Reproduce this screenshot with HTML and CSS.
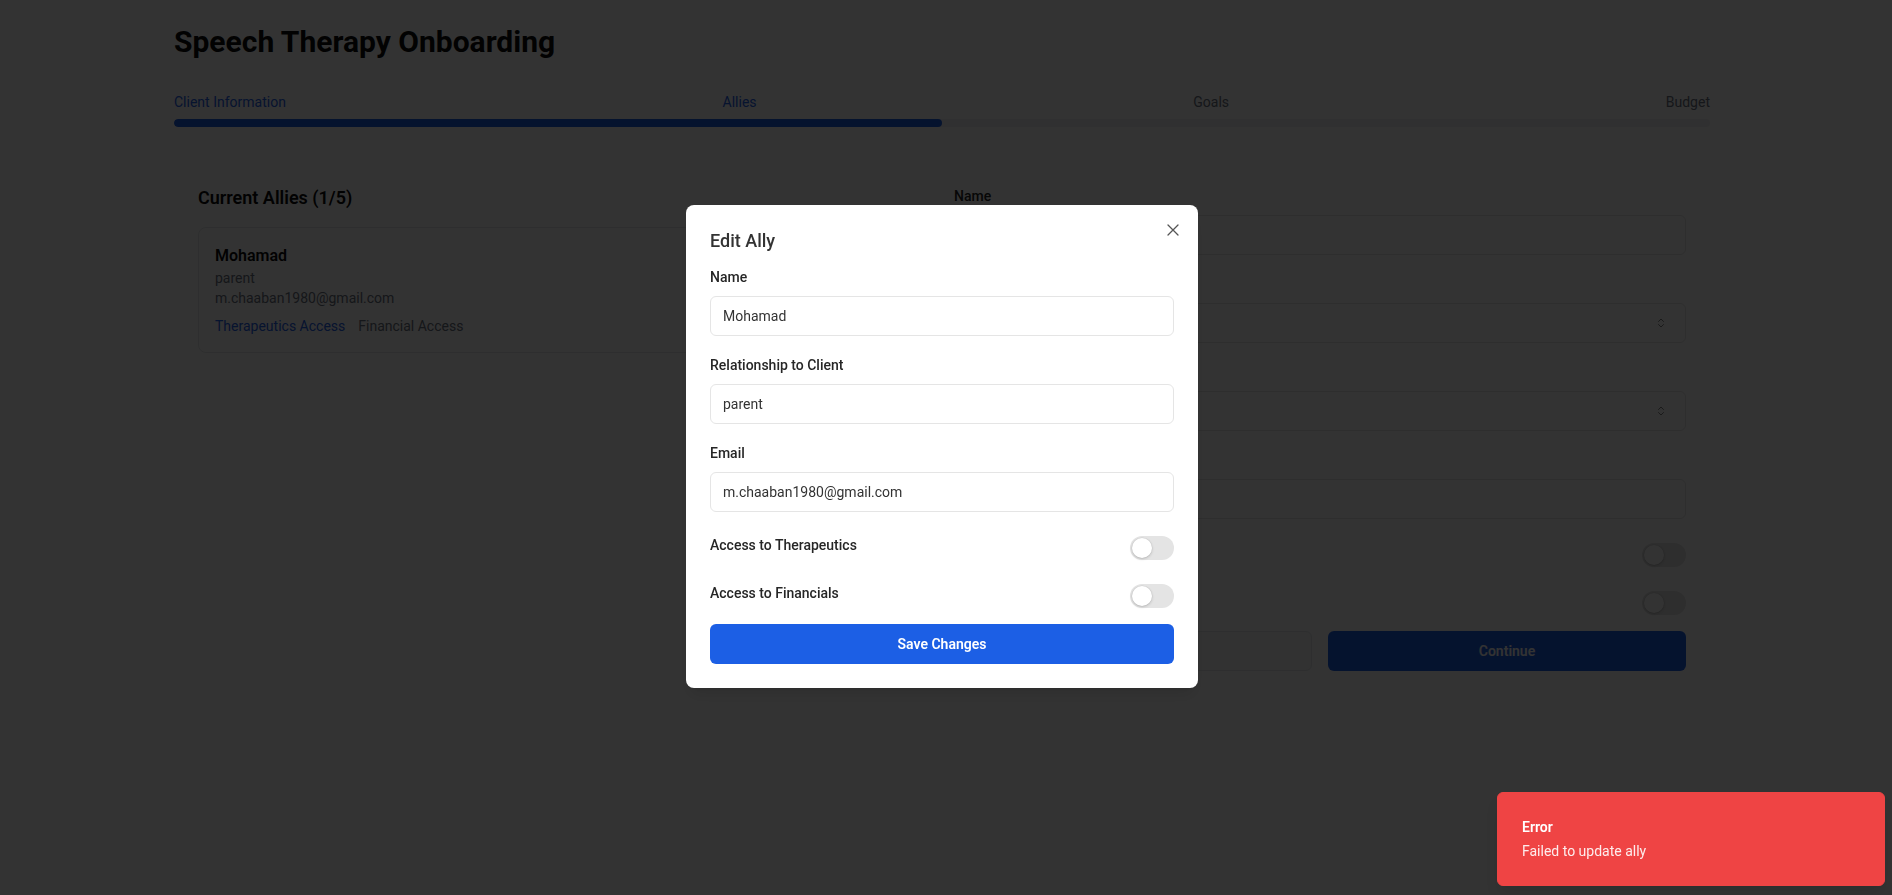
FILE: index.html
```html
<!DOCTYPE html>
<html lang="en">
<head>
<meta charset="utf-8">
<title>Speech Therapy Onboarding</title>
<link rel="stylesheet" href="styles.css">
</head>
<body>
<div class="page">
  <h1 class="title">Speech Therapy Onboarding</h1>
  <div class="steps">
    <div class="step-labels">
      <span class="step done">Client Information</span>
      <span class="step done">Allies</span>
      <span class="step">Goals</span>
      <span class="step">Budget</span>
    </div>
    <div class="progress"><div class="progress-fill" style="width:50%"></div></div>
  </div>

  <div class="content">
    <section class="allies">
      <h2 class="section-title">Current Allies (1/5)</h2>
      <div class="ally-card">
        <div class="ally-name">Mohamad</div>
        <div class="ally-meta">parent</div>
        <div class="ally-meta">m.chaaban1980@gmail.com</div>
        <div class="ally-access">
          <span class="access on">Therapeutics Access</span>
          <span class="access">Financial Access</span>
        </div>
      </div>
    </section>

    <section class="ally-form">
      <div class="field">
        <label class="label">Name</label>
        <div class="input"></div>
      </div>
      <div class="field">
        <label class="label">Relationship to Client</label>
        <div class="input select">
          <span class="placeholder">Select relationship</span>
          <svg class="chev" viewBox="0 0 24 24" width="16" height="16"><path d="m7 15 5 5 5-5M7 9l5-5 5 5" fill="none" stroke="currentColor" stroke-width="2" stroke-linecap="round" stroke-linejoin="round"/></svg>
        </div>
      </div>
      <div class="field">
        <label class="label">Preferred Language</label>
        <div class="input select">
          <span class="placeholder">Select language</span>
          <svg class="chev" viewBox="0 0 24 24" width="16" height="16"><path d="m7 15 5 5 5-5M7 9l5-5 5 5" fill="none" stroke="currentColor" stroke-width="2" stroke-linecap="round" stroke-linejoin="round"/></svg>
        </div>
      </div>
      <div class="field">
        <label class="label">Email</label>
        <div class="input"></div>
      </div>
      <div class="switch-list">
        <div class="switch-row">
          <span class="label">Access to Therapeutics</span>
          <span class="switch"><span class="thumb"></span></span>
        </div>
        <div class="switch-row">
          <span class="label">Access to Financials</span>
          <span class="switch"><span class="thumb"></span></span>
        </div>
      </div>
      <div class="actions">
        <button class="btn btn-outline">Back</button>
        <button class="btn btn-primary">Continue</button>
      </div>
    </section>
  </div>
</div>

<div class="overlay"></div>

<div class="modal" role="dialog">
  <button class="close" aria-label="Close">
    <svg viewBox="0 0 16 16" width="16" height="16"><path d="M3 3l10 10M13 3 3 13" fill="none" stroke="currentColor" stroke-width="1.3" stroke-linecap="round"/></svg>
  </button>
  <h2 class="modal-title">Edit Ally</h2>
  <div class="field">
    <label class="label">Name</label>
    <div class="input filled">Mohamad</div>
  </div>
  <div class="field">
    <label class="label">Relationship to Client</label>
    <div class="input filled">parent</div>
  </div>
  <div class="field">
    <label class="label">Email</label>
    <div class="input filled">m.chaaban1980@gmail.com</div>
  </div>
  <div class="switch-list">
    <div class="switch-row">
      <span class="label">Access to Therapeutics</span>
      <span class="switch"><span class="thumb"></span></span>
    </div>
    <div class="switch-row">
      <span class="label">Access to Financials</span>
      <span class="switch"><span class="thumb"></span></span>
    </div>
  </div>
  <button class="btn btn-save">Save Changes</button>
</div>

<div class="toast">
  <div class="toast-title">Error</div>
  <div class="toast-desc">Failed to update ally</div>
</div>
</body>
</html>
```

FILE: styles.css
```css
* { box-sizing: border-box; }

html, body { margin: 0; }

body {
  font-family: Roboto, "Liberation Sans", Arial, sans-serif;
  background: #ffffff;
  color: #0a0a0a;
  padding: 0 8px 0 0;
}

.page {
  max-width: 1536px;
  margin: 0 auto;
  padding-top: 24px;
}

.title {
  font-size: 30px;
  line-height: 36px;
  font-weight: 700;
  margin: 0 0 32px;
}

.step-labels {
  display: flex;
  justify-content: space-between;
  font-size: 14px;
  line-height: 20px;
  margin-bottom: 7px;
}

.step { color: #6b7280; }
.step.done { color: #2563eb; }

.progress {
  height: 8px;
  border-radius: 9999px;
  background: #eff0f2;
  overflow: hidden;
}

.progress-fill {
  height: 100%;
  background: #1d5fe6;
  border-radius: 9999px;
}

.content {
  margin-top: 32px;
  padding: 25px 24px;
  display: grid;
  grid-template-columns: 1fr 1fr;
  gap: 24px;
}

.section-title {
  font-size: 18px;
  line-height: 28px;
  font-weight: 600;
  margin: 0 0 15px;
}

.ally-card {
  border: 1px solid #e5e7eb;
  border-radius: 8px;
  padding: 16px;
}

.ally-name {
  font-size: 16px;
  line-height: 24px;
  font-weight: 600;
}

.ally-meta {
  font-size: 14px;
  line-height: 20px;
  color: #6b7280;
}

.ally-access {
  margin-top: 8px;
  display: flex;
  gap: 13px;
  font-size: 14px;
  line-height: 20px;
  color: #6b7280;
}

.access.on { color: #2563eb; }

.ally-form { padding-top: 2px; }

.field { margin-bottom: 19px; }

.label {
  display: block;
  font-size: 14px;
  line-height: 20px;
  font-weight: 500;
  color: #262626;
  margin-bottom: 9px;
}

.input {
  height: 40px;
  border: 1px solid #e5e5e5;
  border-radius: 6px;
  padding: 0 12px;
  font-size: 14px;
  display: flex;
  align-items: center;
  color: #333333;
  background: #ffffff;
}

.select { justify-content: space-between; }

.placeholder { color: #6b7280; }

.chev {
  color: #0a0a0a;
  opacity: 0.5;
  width: 16px;
  height: 12px;
  margin-right: 4px;
}

.switch-list {
  padding-top: 5px;
  display: flex;
  flex-direction: column;
  gap: 24px;
  margin-bottom: 16px;
}

.switch-row {
  display: flex;
  justify-content: space-between;
  align-items: flex-start;
  height: 24px;
}

.switch-row .label {
  margin: 0;
  line-height: 16px;
  padding-top: 1px;
}

.switch {
  width: 44px;
  height: 24px;
  border-radius: 9999px;
  background: #e4e4e4;
  padding: 2px;
  display: flex;
  align-items: center;
  flex-shrink: 0;
}

.thumb {
  width: 20px;
  height: 20px;
  border-radius: 50%;
  background: #ffffff;
  box-shadow: 0 1px 3px rgba(0, 0, 0, 0.18), 0 0 0 0.5px rgba(0, 0, 0, 0.06);
}

.actions {
  display: grid;
  grid-template-columns: 1fr 1fr;
  gap: 16px;
}

.btn {
  height: 40px;
  border-radius: 6px;
  font-family: inherit;
  font-size: 14px;
  font-weight: 600;
  border: none;
  cursor: pointer;
}

.btn-outline {
  background: #f7f7f8;
  border: 1px solid #e5e7eb;
  color: #0a0a0a;
}

.btn-primary {
  background: #1d5fe6;
  color: #ffffff;
}

.overlay {
  position: fixed;
  inset: 0;
  background: rgba(0, 0, 0, 0.8);
}

.modal {
  position: fixed;
  left: 686px;
  top: 205px;
  width: 512px;
  background: #ffffff;
  border-radius: 8px;
  padding: 24px;
  box-shadow: 0 10px 15px -3px rgba(0, 0, 0, 0.1), 0 4px 6px -4px rgba(0, 0, 0, 0.1);
}

.modal-title {
  font-size: 18px;
  line-height: 24px;
  font-weight: 500;
  color: #333333;
  margin: 0 0 14px;
}

.close {
  position: absolute;
  right: 17px;
  top: 17px;
  width: 16px;
  height: 16px;
  padding: 0;
  border: none;
  background: none;
  color: #555555;
  display: flex;
}

.input.filled { color: #333333; }

.btn-save {
  width: 100%;
  background: #1c5fe5;
  color: #ffffff;
}

.toast {
  position: fixed;
  right: 7px;
  bottom: 9px;
  width: 388px;
  background: #ef4444;
  border: 1px solid #ef4444;
  border-radius: 6px;
  padding: 24px;
  color: #ffffff;
  font-size: 14px;
  line-height: 20px;
  box-shadow: 0 10px 15px -3px rgba(0, 0, 0, 0.1);
}

.toast-title {
  font-weight: 600;
  margin-bottom: 4px;
}

.toast-desc { opacity: 0.9; }
```
